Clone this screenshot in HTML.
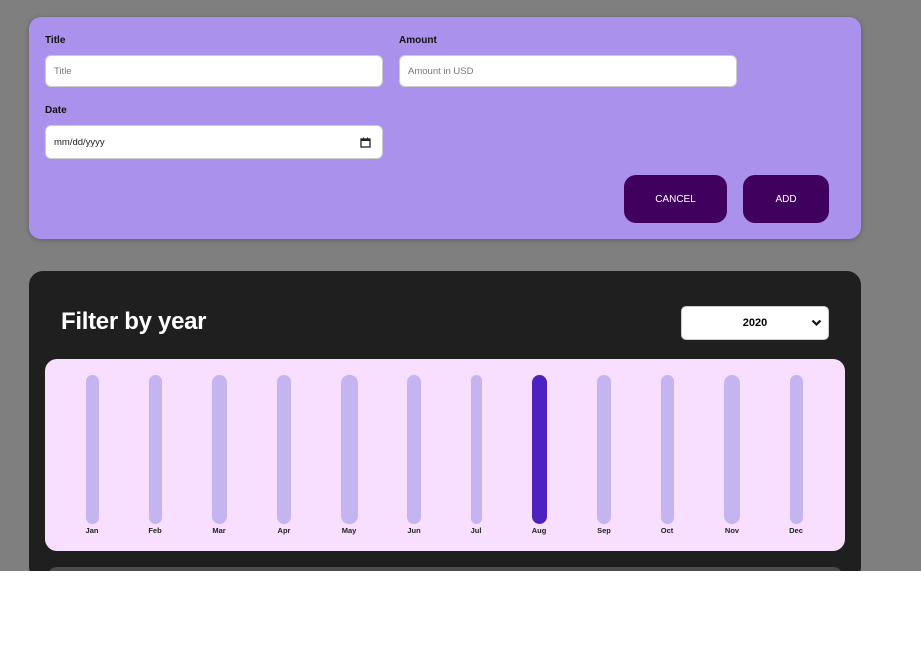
<!DOCTYPE html>
<html><head><meta charset="utf-8"><style>
*{box-sizing:border-box;margin:0;padding:0}
body{width:921px;height:648px;background:#fff;font-family:"Liberation Sans",sans-serif;position:relative;overflow:hidden}
.gray{position:absolute;left:0;top:0;width:921px;height:571px;background:#7f7f7f}
.form{position:absolute;left:29px;top:17px;width:832px;height:222px;background:#a991ec;border-radius:12px;box-shadow:0 1px 6px rgba(0,0,0,.25)}
.lbl{position:absolute;font-size:10px;font-weight:bold;color:#111}
.inp{position:absolute;background:#fff;border:1px solid #ccc;border-radius:6px;font-size:9.5px;color:#777;padding-left:8px;display:flex;align-items:center}
.btn{position:absolute;background:#40005d;color:#fff;border-radius:12px;font-size:10px;display:flex;align-items:center;justify-content:center}
.dark{position:absolute;left:29px;top:271px;width:832px;height:310px;background:#1f1f1f;border-radius:14px}
h1{position:absolute;left:61px;top:308px;color:#fff;font-size:24px;font-weight:bold;letter-spacing:-0.3px}
.sel{position:absolute;left:681px;top:306px;width:148px;height:34px;background:#fff;border:1px solid #ccc;border-radius:5px;font-size:11px;font-weight:bold;display:flex;align-items:center;justify-content:center}
.chart{position:absolute;left:45px;top:359px;width:800px;height:192px;background:#f8dfff;border-radius:12px}
.bar{position:absolute;top:375px;height:149px;background:#c4b5f1;border-radius:8px}
.m{position:absolute;top:526px;font-size:7.5px;font-weight:bold;color:#222;width:40px;text-align:center}
.nxt{position:absolute;left:47px;top:567px;width:796px;height:20px;background:#4b4b4b;border-radius:10px}
.white{position:absolute;left:0;top:571px;width:921px;height:77px;background:#fff}
</style></head><body>
<div class="gray"></div>
<div class="form"></div>
<div class="lbl" style="left:45px;top:35px">Title</div>
<div class="inp" style="left:45px;top:55px;width:338px;height:32px">Title</div>
<div class="lbl" style="left:399px;top:35px">Amount</div>
<div class="inp" style="left:399px;top:55px;width:338px;height:32px">Amount in USD</div>
<div class="lbl" style="left:45px;top:105px">Date</div>
<div class="inp" style="left:45px;top:125px;width:338px;height:34px;color:#222;justify-content:space-between;padding-right:11px">mm/dd/yyyy
<svg width="11" height="11" viewBox="0 0 11 11"><rect x="1" y="2" width="9" height="8" fill="none" stroke="#222" stroke-width="1.3"/><rect x="1" y="2" width="9" height="2" fill="#222"/><rect x="3" y="0.5" width="1" height="2" fill="#222"/><rect x="7" y="0.5" width="1" height="2" fill="#222"/></svg></div>
<div class="btn" style="left:624px;top:175px;width:103px;height:48px">CANCEL</div>
<div class="btn" style="left:743px;top:175px;width:86px;height:48px">ADD</div>
<div class="dark"></div>
<h1>Filter by year</h1>
<div class="sel">2020<svg style="position:absolute;right:6px;top:12px" width="11" height="8" viewBox="0 0 11 8"><path d="M1.5 1.5 L5.5 5.5 L9.5 1.5" fill="none" stroke="#111" stroke-width="2.2"/></svg></div>
<div class="chart"></div>
<div class="bar" style="left:86px;width:13px"></div>
<div class="bar" style="left:149px;width:13px"></div>
<div class="bar" style="left:212px;width:15px"></div>
<div class="bar" style="left:277px;width:14px"></div>
<div class="bar" style="left:341px;width:17px"></div>
<div class="bar" style="left:407px;width:14px"></div>
<div class="bar" style="left:471px;width:11px"></div>
<div class="bar" style="left:532px;width:15px;background:#4b22bf"></div>
<div class="bar" style="left:597px;width:14px"></div>
<div class="bar" style="left:661px;width:13px"></div>
<div class="bar" style="left:724px;width:16px"></div>
<div class="bar" style="left:790px;width:13px"></div>
<div class="m" style="left:72px">Jan</div>
<div class="m" style="left:135px">Feb</div>
<div class="m" style="left:199px">Mar</div>
<div class="m" style="left:264px">Apr</div>
<div class="m" style="left:329px">May</div>
<div class="m" style="left:394px">Jun</div>
<div class="m" style="left:456px">Jul</div>
<div class="m" style="left:519px">Aug</div>
<div class="m" style="left:584px">Sep</div>
<div class="m" style="left:647px">Oct</div>
<div class="m" style="left:712px">Nov</div>
<div class="m" style="left:776px">Dec</div>
<div class="nxt"></div>
<div class="white"></div>
</body></html>
